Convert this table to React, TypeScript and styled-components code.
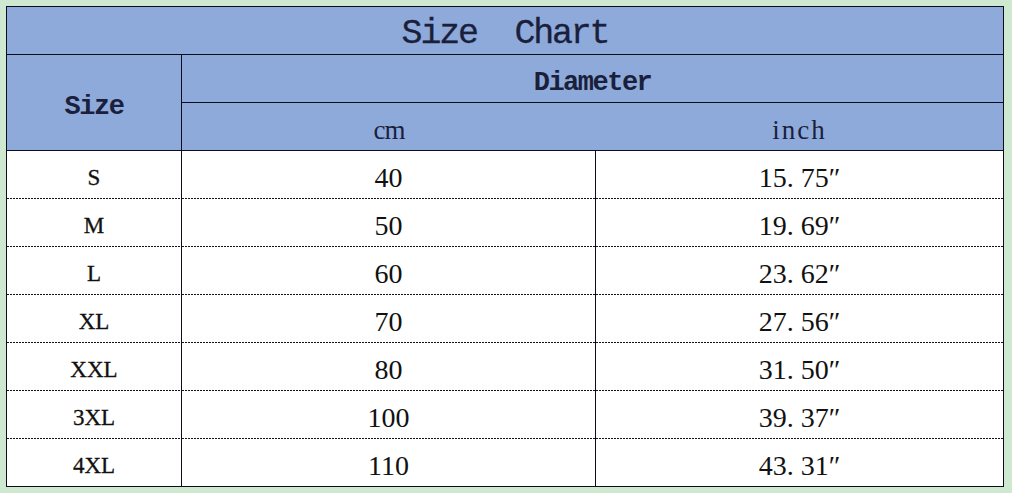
import React from 'react';
import styled, { createGlobalStyle } from 'styled-components';

const GlobalStyle = createGlobalStyle`
  html, body {
    margin: 0;
    padding: 0;
    background-color: #cfe8d0;
  }
`;

const Page = styled.div`
  width: 1012px;
  height: 493px;
  padding: 6px 0 0 6px;
  box-sizing: border-box;
  background-color: #cfe8d0;
`;

const Table = styled.div`
  display: grid;
  grid-template-columns: 175px 414px 407px;
  grid-auto-rows: 48px;
  width: 998px;
  border: 1px solid #0c0c1e;
  border-bottom: none;
  box-sizing: border-box;
  background-color: #ffffff;
`;

const HeadCell = styled.div<{ $span?: number; $rows?: number; $divider?: boolean; $pad?: number }>`
  grid-column: span ${({ $span }) => $span || 1};
  grid-row: span ${({ $rows }) => $rows || 1};
  display: flex;
  align-items: center;
  justify-content: center;
  box-sizing: border-box;
  padding-top: ${({ $pad }) => $pad ?? 5}px;
  background-color: #8eaadb;
  border-bottom: 1px solid #0c0c1e;
  border-right: ${({ $divider }) => ($divider ? '1px solid #0c0c1e' : 'none')};
  color: #1a1f3c;
`;

const Title = styled.span`
  font-family: 'Liberation Mono', 'DejaVu Sans Mono', monospace;
  font-size: 35px;
  letter-spacing: -2.2px;
  white-space: pre;
  -webkit-text-stroke: 0.3px #1a1f3c;
`;

const HeadLabel = styled.span`
  font-family: 'Liberation Mono', 'DejaVu Sans Mono', monospace;
  font-size: 27px;
  font-weight: bold;
  letter-spacing: -1.5px;
`;

const UnitLabel = styled.span<{ $spread?: number }>`
  font-family: 'Liberation Serif', 'DejaVu Serif', serif;
  font-size: 27px;
  letter-spacing: ${({ $spread }) => $spread ?? 0}px;
`;

const Cell = styled.div<{ $divider?: boolean; $last?: boolean }>`
  display: flex;
  align-items: center;
  justify-content: center;
  box-sizing: border-box;
  padding-top: 6px;
  color: #111111;
  font-family: 'Liberation Serif', 'DejaVu Serif', serif;
  border-right: ${({ $divider }) => ($divider ? '1px solid #0c0c1e' : 'none')};
  border-bottom: ${({ $last }) => ($last ? '1px solid #0c0c1e' : 'none')};
  background-image: ${({ $last }) =>
    $last ? 'none' : 'repeating-linear-gradient(90deg, #111 0 2px, transparent 2px 3px)'};
  background-size: 100% 1px;
  background-repeat: no-repeat;
  background-position: left bottom;
`;

const SizeText = styled.span`
  font-size: 23px;
  -webkit-text-stroke: 0.3px #111;
`;

const NumText = styled.span`
  font-size: 28px;
`;

const rows = [
  { size: 'S', cm: '40', inch: '15. 75″' },
  { size: 'M', cm: '50', inch: '19. 69″' },
  { size: 'L', cm: '60', inch: '23. 62″' },
  { size: 'XL', cm: '70', inch: '27. 56″' },
  { size: 'XXL', cm: '80', inch: '31. 50″' },
  { size: '3XL', cm: '100', inch: '39. 37″' },
  { size: '4XL', cm: '110', inch: '43. 31″' },
];

export default function App() {
  return (
    <Page>
      <GlobalStyle />
      <Table>
        <HeadCell $span={3} $pad={6}>
          <Title>Size  Chart</Title>
        </HeadCell>
        <HeadCell $rows={2} $divider $pad={9}>
          <HeadLabel>Size</HeadLabel>
        </HeadCell>
        <HeadCell $span={2} $pad={8}>
          <HeadLabel>Diameter</HeadLabel>
        </HeadCell>
        <HeadCell $pad={7}>
          <UnitLabel $spread={-1}>cm</UnitLabel>
        </HeadCell>
        <HeadCell $pad={7}>
          <UnitLabel $spread={2}>inch</UnitLabel>
        </HeadCell>
        {rows.map((r, i) => {
          const last = i === rows.length - 1;
          return (
            <React.Fragment key={r.size}>
              <Cell $divider $last={last}>
                <SizeText>{r.size}</SizeText>
              </Cell>
              <Cell $divider $last={last}>
                <NumText>{r.cm}</NumText>
              </Cell>
              <Cell $last={last}>
                <NumText>{r.inch}</NumText>
              </Cell>
            </React.Fragment>
          );
        })}
      </Table>
    </Page>
  );
}
